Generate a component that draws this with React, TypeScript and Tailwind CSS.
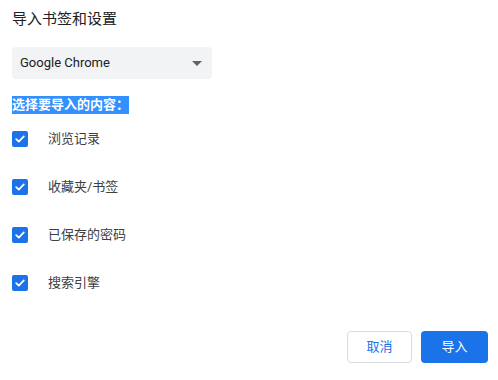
import React from "react";

const items = ["浏览记录", "收藏夹/书签", "已保存的密码", "搜索引擎"];

function Check() {
  return (
    <span className="flex h-4 w-4 items-center justify-center rounded-[2px] bg-[#1a73e8]">
      <svg width="12" height="12" viewBox="0 0 12 12">
        <path d="M2.2 6.2 L4.8 8.6 L9.8 3.4" fill="none" stroke="white" strokeWidth="1.8" strokeLinecap="round" strokeLinejoin="round" />
      </svg>
    </span>
  );
}

export default function App() {
  return (
    <div
      className="flex h-[380px] w-[498px] flex-col bg-white text-[#202124]"
      style={{ fontFamily: '"Roboto", "Noto Sans CJK SC", sans-serif' }}
    >
      <div className="px-3 pt-[9px] text-[15px] leading-[20px] text-[#202124]">导入书签和设置</div>
      <div className="mt-[18px] flex h-8 w-[200px] ml-3 items-center justify-between rounded-[4px] bg-[#f1f3f4] pl-2 pr-[10px]">
        <span className="text-[13px] text-[#202124]">Google Chrome</span>
        <svg width="10" height="5" viewBox="0 0 10 5">
          <path d="M0 0 L10 0 L5 5 Z" fill="#5f6368" />
        </svg>
      </div>
      <div className="ml-3 mt-[17px] flex">
        <span className="bg-[#3390ff] text-[13px] font-bold leading-[18px] text-white">选择要导入的内容：</span>
      </div>
      <div className="mt-[1px] flex flex-col">
        {items.map((t) => (
          <div key={t} className="flex h-12 items-center px-3">
            <Check />
            <span className="ml-5 text-[13px] text-[#3c4043]">{t}</span>
          </div>
        ))}
      </div>
      <div className="mt-auto mb-[17px] flex justify-end gap-[9px] pr-[10px]">
        <button className="h-8 w-[65px] rounded-[4px] border border-[#dadce0] bg-white text-[13px] text-[#1a73e8]">
          取消
        </button>
        <button className="h-8 w-[67px] rounded-[4px] bg-[#1a73e8] text-[13px] text-white">导入</button>
      </div>
    </div>
  );
}
